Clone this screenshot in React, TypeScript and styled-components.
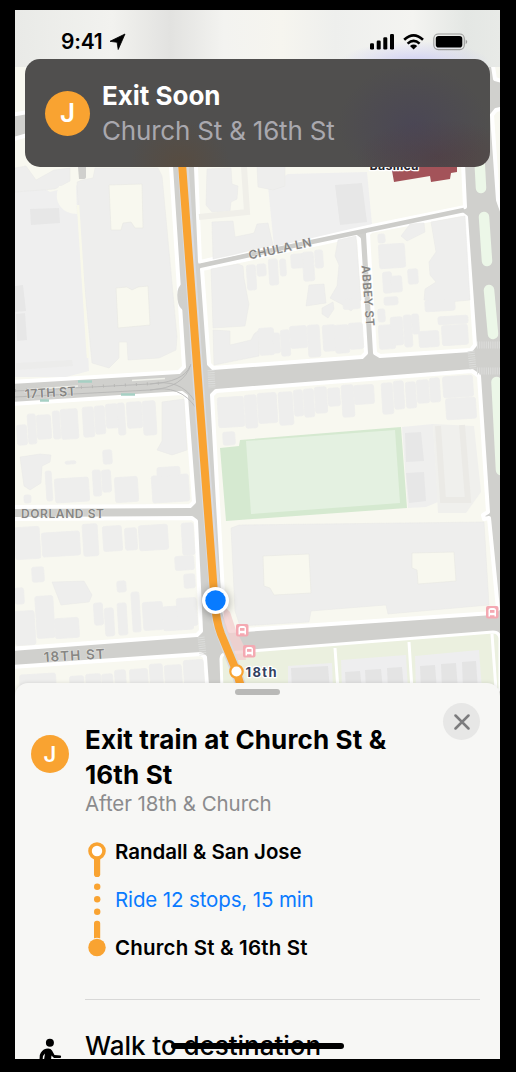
import React from "react";
import styled, { createGlobalStyle } from "styled-components";

const GlobalStyle = createGlobalStyle`
  html, body { margin: 0; background: #000; }
  body { font-family: Inter, "Liberation Sans", sans-serif; -webkit-font-smoothing: antialiased; }
  * { box-sizing: border-box; }
`;

const Page = styled.div`
  width: 516px;
  height: 1072px;
  padding: 10px 16px 13px 15px;
  background: #000;
`;

const Screen = styled.main`
  position: relative;
  display: flex;
  flex-direction: column;
  width: 485px;
  height: 1049px;
  overflow: hidden;
  background: #cfcfcb;
`;

const MapCanvas = styled.svg`
  position: absolute;
  top: 0;
  left: 0;
  width: 485px;
  height: 690px;
`;

const StatusBar = styled.header`
  position: relative;
  display: flex;
  justify-content: space-between;
  height: 49px;
  padding: 22px 32px 0 46px;
`;

const Clock = styled.div`
  display: flex;
  align-items: center;
  gap: 6px;
  height: 20px;
  font-size: 21px;
  font-weight: 600;
  line-height: 20px;
  letter-spacing: -0.2px;
  color: #000;
`;

const StatusIcons = styled.svg`
  width: 99px;
  height: 20px;
`;

const Banner = styled.section`
  position: relative;
  display: flex;
  align-items: center;
  gap: 12px;
  height: 108px;
  margin: 0 10px;
  padding: 0 20px;
  border-radius: 15px;
  background:
    radial-gradient(ellipse 75px 60px at 388px 66px, rgba(70, 64, 90, 0.55), transparent),
    radial-gradient(ellipse 80px 38px at 412px 98px, rgba(84, 58, 60, 0.6), transparent),
    radial-gradient(ellipse 50px 45px at 155px 105px, rgba(92, 74, 56, 0.6), transparent),
    #504f4e;
`;

const BannerText = styled.div`
  display: flex;
  flex-direction: column;
`;

const BannerTitle = styled.div`
  font-size: 26px;
  font-weight: 700;
  line-height: 35px;
  letter-spacing: -0.02px;
  color: #fff;
`;

const BannerSubtitle = styled.div`
  font-size: 26px;
  font-weight: 400;
  line-height: 35px;
  letter-spacing: -0.2px;
  color: #a9a8ae;
`;

const LineBadge = styled.span<{ $size: number; $font: number }>`
  display: flex;
  flex: none;
  align-items: center;
  justify-content: center;
  width: ${(p) => p.$size}px;
  height: ${(p) => p.$size}px;
  border-radius: 50%;
  background: #f9a331;
  color: #fff;
  font-size: ${(p) => p.$font}px;
  font-weight: 600;
  line-height: 1;
`;

const Sheet = styled.section`
  position: relative;
  height: 376px;
  margin-top: auto;
  border-radius: 13px 13px 0 0;
  background: #f7f7f5;
  box-shadow: 0 0 4px rgba(0, 0, 0, 0.12);
`;

const Handle = styled.div`
  position: absolute;
  top: 6px;
  left: 220px;
  width: 45px;
  height: 6px;
  border-radius: 3px;
  background: #b9b9b7;
`;

const CloseButton = styled.button`
  position: absolute;
  top: 20px;
  right: 20px;
  display: flex;
  align-items: center;
  justify-content: center;
  width: 37px;
  height: 37px;
  padding: 0;
  border: 0;
  border-radius: 50%;
  background: #e7e7e6;
`;

const Step = styled.article`
  display: grid;
  grid-template-columns: 70px 1fr;
  padding-top: 39px;
`;

const StepIcon = styled.div`
  padding: 13px 0 0 16px;
`;

const StepTitle = styled.h2`
  margin: 0;
  font-size: 26px;
  font-weight: 700;
  line-height: 35px;
  letter-spacing: 0.13px;
  color: #000;
`;

const StepNote = styled.p`
  margin: 0;
  font-size: 20.5px;
  line-height: 23px;
  letter-spacing: -0.07px;
  color: #8b8b8d;
`;

const Timeline = styled.div`
  display: grid;
  grid-template-columns: 30px 1fr;
  margin-top: 12px;
`;

const Rail = styled.svg`
  width: 26px;
  height: 144px;
`;

const Stops = styled.div`
  display: flex;
  flex-direction: column;
`;

const Stop = styled.div<{ $link?: boolean; $spacing: number }>`
  height: 48px;
  font-size: 20.5px;
  font-weight: ${(p) => (p.$link ? 400 : 600)};
  line-height: 49px;
  letter-spacing: ${(p) => p.$spacing}px;
  color: ${(p) => (p.$link ? "#0a7aff" : "#000")};
`;

const Divider = styled.hr`
  height: 1px;
  margin: 28px 20px 0 70px;
  border: 0;
  background: #d8d8d7;
`;

const NextStep = styled.article`
  display: grid;
  grid-template-columns: 70px 1fr;
  height: 60px;
  padding-top: 29px;
`;

const WalkIcon = styled.svg`
  width: 40px;
  height: 31px;
  margin-left: 15px;
`;

const NextTitle = styled.div`
  font-size: 26px;
  font-weight: 500;
  line-height: 34px;
  letter-spacing: -0.03px;
  color: #000;
`;

const HomeIndicator = styled.div`
  position: absolute;
  bottom: 10px;
  left: 156px;
  width: 173px;
  height: 6px;
  border-radius: 3px;
  background: #000;
`;

const blocks = [
  "10,140 80,120 168,120 184,367 179,372 10,382",
  "10,60 28,66 28,112 10,115",
  "194,120 200,262 245,252 465,207 461,120",
  "202,269 355,236 359,239 366,353 362,357 213,368 209,364",
  "368,234 371,231 462,214 466,217 475,345 471,350 380,356 375,353",
  "10,404 182,393 186,396 194,502 190,506 10,507",
  "10,519 192,518 196,521 201,631 197,635 10,649",
  "10,667 201,654 205,657 208,700 10,700",
  "212,395 216,391 472,371 479,376 488,512 483,515 484,519 489,518 498,609 493,613 230,631 224,612",
  "492,60 505,60 505,82 495,79",
  "492,115 496,110 505,108 505,220 498,200",
];

const lots = [
  "15,188 42,187 50,192 78,185 80,205 89,371 66,377 15,377",
  "268,186 288,174 367,172 372,224 274,247",
];

const buildings = [
  "15,168 26,166 36,180 54,170 70,168 70,181 55,189 15,192",
  "77,182 82,180 93,178 95,168 158,168 162,176 168,240 177,337 176,350 159,358 128,360 127,342 119,342 119,358 109,368 92,363 80,240",
  "207,169 231,168 232,184 238,186 237,199 231,202 230,211 212,212 206,205",
  "257,166 285,166 285,186 273,190 258,187",
  "212,222 233,221 235,237 254,233 257,224 268,223 273,245 232,255 213,259",
  "211,269 238,264 243,266 244,278 248,300 249,304 247,315 245,326 213,328",
  "213,330 230,331 230,345 251,340 254,334 259,330 259,356 214,365",
  "338,240 356,236 361,300 351,311 343,305 330,298 337,286 339,265 335,256",
  "309,285 324,284 326,303 306,306",
  "322,308 333,302 334,309 328,318 322,314",
  "401,236 410,224 424,223 425,232 407,241",
  "431,222 465,216 470,300 438,303 424,300 425,289 436,282 430,275 429,262 436,252",
  "20,457 40,454 51,455 50,462 42,466 41,483 30,490 24,486",
  "52,582 84,581 92,595 89,602 61,605",
  "162,402 184,399 187,450 172,455 157,450 162,441",
  "231,528 239,525 484,522 489,605 388,614 386,605 311,611 309,622 240,626 235,611",
];

const houses: Array<[number, number, number, number]> = [
  // Chula Lane to 17th Street
  [247, 265, 9, 25], [257, 264, 9, 12], [269, 259, 9, 26], [280, 259, 6, 17], [291, 254, 13, 14], [303, 252, 11, 29], [315, 250, 8, 18],
  [259, 328, 15, 27], [281, 330, 9, 26], [273, 333, 7, 20], [290, 326, 17, 22], [308, 325, 12, 32],
  [323, 325, 13, 26], [335, 325, 14, 28], [349, 323, 14, 26], [343, 299, 17, 10],
  // Abbey Street
  [378, 234, 7, 9], [379, 244, 26, 24], [383, 272, 9, 21], [391, 276, 11, 16], [384, 297, 14, 8], [378, 309, 7, 13], [408, 269, 10, 15],
  [379, 325, 16, 24], [391, 317, 12, 28], [404, 315, 8, 32], [412, 314, 7, 20], [419, 331, 20, 16], [442, 325, 26, 20], [438, 316, 30, 8], [425, 300, 30, 11],
  // south of 17th Street, west
  [17, 425, 10, 20], [28, 414, 8, 30], [37, 415, 14, 24], [53, 411, 7, 28], [61, 409, 17, 30], [83, 407, 11, 30],
  [95, 406, 10, 28], [106, 404, 12, 24], [118, 403, 7, 32], [127, 402, 15, 26], [143, 401, 13, 34],
  [46, 471, 6, 30], [55, 478, 34, 24], [93, 470, 8, 26], [102, 470, 9, 22], [115, 477, 23, 25], [152, 475, 37, 27], [157, 467, 23, 9],
  [103, 450, 9, 14], [65, 461, 11, 3], [24, 495, 7, 8],
  // south of Dorland Street
  [15, 527, 25, 32], [42, 532, 38, 24], [83, 524, 15, 32], [103, 526, 19, 25], [125, 528, 12, 22], [139, 525, 29, 25],
  [182, 523, 12, 32], [175, 556, 19, 14], [32, 567, 12, 15], [117, 581, 9, 11], [184, 574, 11, 14],
  [15, 588, 9, 16], [15, 611, 20, 34], [36, 596, 18, 42], [55, 618, 24, 20], [94, 603, 9, 22], [105, 608, 9, 28],
  [118, 603, 9, 32], [132, 592, 8, 40], [143, 602, 20, 28], [163, 606, 30, 24], [177, 598, 20, 28],
  // south of 18th Street
  [20, 674, 36, 18], [70, 676, 14, 16], [86, 674, 15, 16], [102, 674, 11, 16], [115, 670, 11, 20], [130, 669, 18, 22],
  [150, 664, 13, 28], [165, 665, 17, 26], [184, 660, 20, 30],
  // north of the playing field
  [218, 397, 26, 30], [245, 395, 12, 33], [258, 393, 19, 30], [279, 392, 14, 33], [294, 390, 9, 26], [304, 389, 10, 28],
  [315, 387, 12, 26], [328, 388, 12, 18], [342, 385, 12, 32], [354, 385, 20, 19], [382, 383, 11, 31], [394, 381, 10, 28],
  [406, 382, 10, 26], [417, 380, 12, 23], [430, 378, 10, 24], [443, 376, 30, 21], [446, 398, 30, 21], [223, 432, 12, 13],
];

const yards = [
  "109,185 142,184 143,228 135,228 131,222 123,223 121,230 111,230",
  "116,288 127,287 132,290 138,287 148,286 150,325 118,328",
  "263,556 309,554 311,593 274,595 270,588 264,586",
  "412,553 454,552 456,581 418,584 417,570 412,568",
];

const darkLots = [
  "30,209 59,208 60,223 31,225",
  "15,286 23,285 26,311 15,312",
  "16,314 25,313 27,340 17,341",
  "335,185 362,183 367,222 340,225",
];

const shelterPins = [
  { x: 236, y: 624 },
  { x: 243, y: 645 },
  { x: 486, y: 606 },
];

const tracks = [
  "M15 391 L150 384 Q184 382 190 366",
  "M15 397 L150 390 Q184 388 191 364",
  "M150 384 Q180 378 194 400",
  "M150 390 Q180 384 196 408",
];

function StreetMap() {
  return (
    <MapCanvas viewBox="15 10 485 690" fontFamily="Inter, sans-serif">
      <defs>
        <linearGradient id="haze" x1="0" x2="1" y1="0" y2="0">
          <stop offset="0" stopColor="#e9eae7" />
          <stop offset="0.2" stopColor="#f2f2ef" />
          <stop offset="0.32" stopColor="#e2e2e0" />
          <stop offset="0.43" stopColor="#f3f3f0" />
          <stop offset="0.55" stopColor="#f6f5ef" />
          <stop offset="0.66" stopColor="#eeefed" />
          <stop offset="0.82" stopColor="#f4f4f1" />
          <stop offset="0.93" stopColor="#e4e7e4" />
          <stop offset="1" stopColor="#e8eae7" />
        </linearGradient>
        <radialGradient id="violet">
          <stop offset="0" stopColor="#cfcff4" />
          <stop offset="1" stopColor="#cfcff4" stopOpacity="0" />
        </radialGradient>
        <filter id="soft" x="-60%" y="-60%" width="220%" height="220%">
          <feGaussianBlur stdDeviation="4" />
        </filter>
      </defs>
      <rect x="15" y="10" width="485" height="690" fill="#d0d0cd" />
      <path d="M222 690 L221 659 Q221 654 227 653 L493 632 Q499 632 500 638 V690 Z" fill="#ebf0df" stroke="#fff" strokeWidth="3" />

      <g fill="#f8f8f0" stroke="#fff" strokeWidth="4" strokeLinejoin="round">
        {blocks.map((p) => <polygon key={p} points={p} />)}
      </g>
      <path d="M181 286 Q177.500 290 178.500 299 Q179.500 306 182 308 Z" fill="#d0d0cd" stroke="#d0d0cd" strokeWidth="2" />
      <g fill="#efefef">
        {lots.map((p) => <polygon key={p} points={p} />)}
      </g>
      <g fill="#eeeeed" stroke="#e9e9e6" strokeWidth="0.5" strokeLinejoin="round">
        {buildings.map((p) => <polygon key={p} points={p} />)}
      </g>
      <g fill="#eeeeed" stroke="#eeeeed" strokeWidth="0.8">
        {houses.map(([x, y, w, h]) => (
          <rect
            key={`${x}-${y}`}
            x={x}
            y={y}
            width={w}
            height={h}
            rx="2"
            transform={`rotate(-3.5 ${x + w / 2} ${y + h / 2})`}
          />
        ))}
      </g>
      <path d="M59 186 L76 185 L77 214 Q66 214 60 206 Q54 198 59 186 Z" fill="#f8f8f0" />
      <g fill="#f8f8ef" stroke="#e8e8e2" strokeWidth="0.6">
        {yards.map((p) => <polygon key={p} points={p} />)}
      </g>
      <g fill="#e7e7e7">
        {darkLots.map((p) => <polygon key={p} points={p} />)}
      </g>
      <polygon points="16,363 72,360 73,366 16,370" fill="#ececeb" />
      <path d="M78 167 h8 v10 q0 2 -3 2 h-4 z" fill="#d0d0cd" />
      <path d="M78 205 L88 358" stroke="#f8f8ea" strokeWidth="2.5" />
      <path d="M199 217 L247 212 L244 167" stroke="#f0efe9" strokeWidth="6" fill="none" />

      <polygon points="220,448 239,446 240,440 401,427 407,508 226,521" fill="#d5e9d0" />
      <polygon points="246,441 395,430 400,503 251,514" fill="#e4f1e1" />
      <polygon points="402,427 433,424 438,502 426,507 408,508" fill="#efefee" />
      <polygon points="433,424 474,426 481,492 466,513 438,513" fill="#f0f0ed" />
      <path d="M438 426 L443 500 H468 L462 425" fill="none" stroke="#ebeae6" strokeWidth="6" />
      <polygon points="405,433 421,432 424,461 406,462" fill="#e7e7e7" />
      <polygon points="406,473 424,472 426,501 409,503" fill="#e7e7e7" />

      <g fill="#eeeeef">
        <polygon points="288,666 332,663 333,690 288,690" />
        <polygon points="341,660 406,655 408,690 342,690" />
        <polygon points="415,656 479,650 482,690 416,690" />
      </g>
      <g fill="#e4e4e4">
        <polygon points="291,668 328,666 330,690 292,690" />
        <polygon points="345,672 360,671 362,690 346,690" />
        <polygon points="365,670 381,669 383,690 366,690" />
        <polygon points="387,668 402,667 404,690 388,690" />
        <polygon points="420,666 435,665 437,690 421,690" />
        <polygon points="441,664 456,663 458,690 442,690" />
        <polygon points="462,662 476,661 478,690 463,690" />
      </g>
      <path d="M335 648 L338 690 M409 642 L412 690 M492 634 L496 690" stroke="#fff" strokeWidth="3" />

      <g stroke="#ecf7e8" strokeWidth="10.5" strokeLinecap="round">
        <path d="M479 150 L481 188" />
        <path d="M484 217 L487 261" />
        <path d="M489 290 L493 334" />
        <path d="M496.5 382 L501 470" />
      </g>
      <g stroke="#dcdddb" strokeWidth="7" strokeDasharray="1 1.2">
        <path d="M477 345 H500 M477 371 H500" />
        <path d="M471 351 L473 369 M211 370 L212 388 M201 637 L203 655 M224 634 L226 652" />
      </g>

      <polygon points="391,165 457,160 457,172 451,173 450,179 431,182 430,176 394,182" fill="#a35359" />

      <path d="M199 266 L245 256 L464 210" stroke="#cdcdca" strokeWidth="4.5" fill="none" />
      <g fill="none" stroke="#b7b7b5" strokeWidth="0.9">
        {tracks.map((d) => <path key={d} d={d} />)}
      </g>
      <path d="M15 390.500 L165 383" stroke="#b7b7b5" strokeWidth="3" strokeDasharray="1 10" />
      <path d="M36 389 L78 386 M132 380.500 L165 378.500" stroke="#eff0ea" strokeWidth="1.5" />
      <path d="M78 381.500 h14 M121 394.500 h14 M40 400.500 h9" stroke="#a6d0c4" strokeWidth="2.4" />

      <polygon points="224,606 230,612 236,630 244,646 246,660 232,660 222,640" fill="#f3cfcf" opacity="0.8" />
      <path d="M182 150 L201 420 L215.500 600 Q216 620 222 634 L236 671 L242 690" fill="none" stroke="#d9dbe0" strokeWidth="11" />
      <path d="M181 150 L201 420 L214.500 600 Q216 621 221 634 L236 670 L242 690" fill="none" stroke="#f9a331" strokeWidth="8" />

      {shelterPins.map((p) => (
        <g key={p.x} transform={`translate(${p.x} ${p.y})`}>
          <rect width="12.500" height="12.500" rx="2" fill="#f4a9b2" />
          <path d="M2.500 10.500 V4.500 Q2.500 2 5 2 H7.500 Q10 2 10 4.500 V10.500 H8.500 V9.300 H4 V10.500 Z" fill="#fff" />
          <rect x="4" y="4" width="4.500" height="2.800" fill="#f4a9b2" />
        </g>
      ))}

      <circle cx="236.500" cy="671.500" r="6.200" fill="#fff" stroke="#f9a331" strokeWidth="2.200" />
      <circle cx="215.500" cy="602" r="14" fill="#000" opacity="0.3" filter="url(#soft)" />
      <circle cx="215.500" cy="600.500" r="13.500" fill="#fff" />
      <circle cx="215.500" cy="600.500" r="10.200" fill="#087bff" />

      <g fill="#878684" fontWeight="600" stroke="#f3f3f0" strokeWidth="1.2" strokeOpacity="0.6" paintOrder="stroke" strokeLinejoin="round">
        <text transform="translate(249.500 259.500) rotate(-12)" fontSize="12" textLength="64">CHULA LN</text>
        <text transform="translate(361.500 265.500) rotate(85.500)" fontSize="11.500" textLength="61">ABBEY ST</text>
        <text transform="translate(25 398.500) rotate(-3.300)" fontSize="12.500" textLength="51">17TH ST</text>
        <text x="21" y="517.500" fontSize="12" textLength="83">DORLAND ST</text>
        <text transform="translate(44 662) rotate(-3.300)" fontSize="13.500" textLength="61">18TH ST</text>
      </g>
      <g stroke="#fff" strokeWidth="2.500" paintOrder="stroke" strokeLinejoin="round">
        <text x="245.500" y="676.500" fontSize="13" fontWeight="700" fill="#33415f" textLength="31">18th</text>
        <text x="369.500" y="169.500" fontSize="12.500" fontWeight="700" fill="#25252d" textLength="49">Basilica</text>
      </g>

      <rect x="15" y="10" width="485" height="57" fill="url(#haze)" />
      <ellipse cx="415" cy="63" rx="75" ry="22" fill="url(#violet)" />
    </MapCanvas>
  );
}

export default function App() {
  return (
    <Page>
      <GlobalStyle />
      <Screen>
        <StreetMap />
        <StatusBar>
          <Clock>
            9:41
            <svg width="17" height="18" viewBox="0 0 17 18">
              <path d="M16 1 L1 8.300 L8.100 9.300 L9.200 16.500 Z" fill="#000" stroke="#000" strokeWidth="0.8" strokeLinejoin="round" />
            </svg>
          </Clock>
          <StatusIcons viewBox="369 32 99 20">
            <rect x="370" y="43.300" width="4" height="6.200" rx="1.200" />
            <rect x="376.700" y="40.500" width="4" height="9" rx="1.200" />
            <rect x="383.300" y="37.300" width="4" height="12.200" rx="1.200" />
            <rect x="390" y="34" width="4" height="15.500" rx="1.200" />
            <g fill="none" stroke="#000" strokeWidth="2.600">
              <path d="M404.200 39.800 Q413.600 31 423 39.800" />
              <path d="M407.600 43.600 Q413.600 38.200 419.600 43.600" />
            </g>
            <path d="M410 46 Q413.600 43.200 417.200 46 L413.600 49.600 Z" />
            <rect x="433.800" y="34" width="30.500" height="15.600" rx="4.500" fill="none" stroke="#9b9b9a" strokeWidth="1.100" />
            <rect x="435.800" y="36" width="26.500" height="11.600" rx="2.800" />
            <path d="M465.700 39.400 Q468.800 41.800 465.700 44.200 Z" fill="#9b9b9a" />
          </StatusIcons>
        </StatusBar>
        <Banner>
          <LineBadge $size={45} $font={26}>J</LineBadge>
          <BannerText>
            <BannerTitle>Exit Soon</BannerTitle>
            <BannerSubtitle>Church St &amp; 16th St</BannerSubtitle>
          </BannerText>
        </Banner>
        <Sheet>
          <Handle />
          <CloseButton aria-label="Close">
            <svg width="16" height="16" viewBox="0 0 16 16" stroke="#7c7c7e" strokeWidth="2.500" strokeLinecap="round">
              <path d="M1.500 1.500 L14.500 14.500 M14.500 1.500 L1.500 14.500" />
            </svg>
          </CloseButton>
          <Step>
            <StepIcon>
              <LineBadge $size={38} $font={22}>J</LineBadge>
            </StepIcon>
            <div>
              <StepTitle>
                Exit train at Church St &amp;
                <br />
                16th St
              </StepTitle>
              <StepNote>After 18th &amp; Church</StepNote>
              <Timeline>
                <Rail viewBox="85 827 26 144" fill="#f9a331">
                  <rect x="94" y="856" width="6.200" height="21" rx="2.800" />
                  <circle cx="97" cy="851" r="7" fill="#fff" stroke="#f9a331" strokeWidth="3.600" />
                  <circle cx="97.200" cy="886.700" r="3.200" />
                  <circle cx="97.200" cy="899.300" r="3.200" />
                  <circle cx="97.200" cy="911.700" r="3.200" />
                  <rect x="94" y="920.700" width="6.200" height="20" rx="2.800" />
                  <circle cx="97" cy="947.500" r="9.700" fill="#f7f7f5" />
                  <circle cx="97" cy="947.500" r="8.700" />
                </Rail>
                <Stops>
                  <Stop $spacing={-0.04}>Randall &amp; San Jose</Stop>
                  <Stop $link $spacing={-0.13}>Ride 12 stops, 15 min</Stop>
                  <Stop $spacing={0.17}>Church St &amp; 16th St</Stop>
                </Stops>
              </Timeline>
            </div>
          </Step>
          <Divider />
          <NextStep>
            <WalkIcon viewBox="30 1029 40 31">
              <circle cx="49.900" cy="1042.800" r="4" />
              <path d="M39.500 1060 L39.800 1055 Q41.500 1050 46 1048.800 Q50.500 1047.800 52 1050.500 L54.500 1055 L60.500 1055.400 Q61.700 1056.500 60.500 1058 L54 1058 L51.500 1055.500 L51 1060 H44 L45 1053.500 L43 1056 L42.600 1060 Z" />
            </WalkIcon>
            <NextTitle>Walk to destination</NextTitle>
          </NextStep>
          <HomeIndicator />
        </Sheet>
      </Screen>
    </Page>
  );
}
